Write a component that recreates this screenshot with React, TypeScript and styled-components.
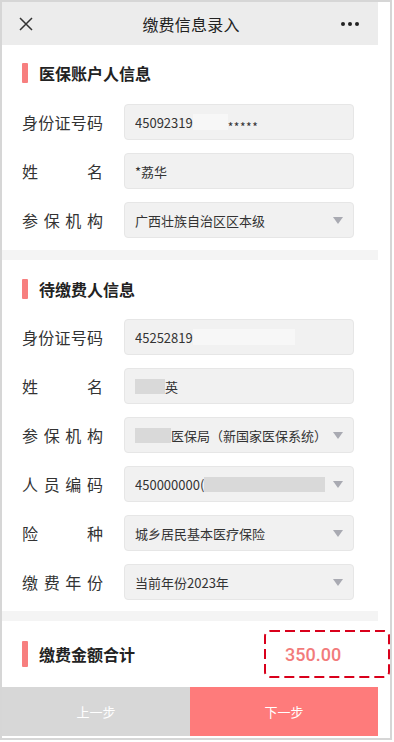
import React from "react";
import styled, { createGlobalStyle } from "styled-components";

const Global = createGlobalStyle`
  html, body { margin: 0; padding: 0; background: #ffffff; }
  body { font-family: "Noto Sans CJK SC", "Noto Sans", sans-serif; color: #333; }
  * { box-sizing: border-box; }
`;

const Frame = styled.div`
  width: 392px;
  height: 740px;
  border: 2px solid #d6d6d6;
  padding: 0 12px 2px 0;
  background: #fff;
`;

const Page = styled.div`
  width: 376px;
  height: 734px;
  display: flex;
  flex-direction: column;
  background: #fff;
`;

const Header = styled.div`
  height: 43px;
  flex: none;
  background: #ececec;
  display: flex;
  align-items: center;
  justify-content: space-between;
  padding: 0 16px 0 12px;
`;

const HeaderTitle = styled.div`
  font-size: 16px;
  color: #222;
  letter-spacing: 0.2px;
  margin-left: 6px;
`;

const IconBox = styled.div`
  width: 24px;
  height: 24px;
  display: flex;
  align-items: center;
  justify-content: center;
`;

const Section = styled.div<{ $pt: number; $pb: number }>`
  flex: none;
  padding: ${(p) => p.$pt}px 0 ${(p) => p.$pb}px 20px;
  display: flex;
  flex-direction: column;
`;

const SectionTitle = styled.div`
  display: flex;
  align-items: center;
  gap: 11px;
  height: 20px;
  font-size: 16px;
  font-weight: 700;
  color: #222;
`;

const Bar = styled.span<{ $h: number }>`
  display: block;
  width: 6px;
  height: ${(p) => p.$h}px;
  background: #f77f7f;
  border-radius: 1px;
`;

const Rows = styled.div<{ $mt: number }>`
  margin-top: ${(p) => p.$mt}px;
  display: flex;
  flex-direction: column;
  gap: 13px;
`;

const Row = styled.div`
  display: flex;
  align-items: center;
  gap: 21px;
`;

const Label = styled.div`
  width: 81px;
  font-size: 16px;
  color: #333;
  text-align: justify;
  text-align-last: justify;
  white-space: nowrap;
  line-height: 20px;
`;

const Field = styled.div`
  width: 230px;
  height: 36px;
  background: #f1f1f1;
  border: 1px solid #e6e6e6;
  border-radius: 4px;
  display: flex;
  align-items: center;
  padding: 0 10px;
  font-size: 13px;
  color: #333;
  white-space: nowrap;
  overflow: hidden;
`;

const Value = styled.div`
  flex: 1;
  display: flex;
  align-items: center;
  overflow: hidden;
`;

const Mask = styled.span<{ $w: number; $dark?: boolean }>`
  display: inline-block;
  width: ${(p) => p.$w}px;
  height: ${(p) => (p.$dark ? 15 : 16)}px;
  background: ${(p) => (p.$dark ? "#d9d9d9" : "#f7f7f7")};
  flex: none;
`;

const Stars = styled.span`
  font-size: 12px;
  align-self: flex-start;
  margin-top: 8px;
  letter-spacing: 0.5px;
`;

const Caret = styled.span`
  flex: none;
  width: 0;
  height: 0;
  border-left: 5px solid transparent;
  border-right: 5px solid transparent;
  border-top: 7px solid #a9aab2;
`;

const Divider = styled.div`
  height: 10px;
  flex: none;
  background: #f4f4f4;
`;

const TotalSection = styled.div`
  height: 66px;
  flex: none;
  display: flex;
  align-items: center;
  justify-content: space-between;
  padding-left: 20px;
`;

const AmountBox = styled.div`
  position: relative;
  width: 126px;
  height: 48px;
  margin-right: -12px;
  display: flex;
  align-items: center;
  padding-left: 21px;
  font-family: "Roboto", "Noto Sans", sans-serif;
  font-size: 18px;
  font-weight: 500;
  color: #f27b7b;
`;

const DashSvg = styled.svg`
  position: absolute;
  inset: 0;
  pointer-events: none;
`;

const Footer = styled.div`
  flex: none;
  height: 49px;
  display: flex;
`;

const StepButton = styled.div<{ $primary?: boolean }>`
  flex: 1;
  display: flex;
  align-items: center;
  justify-content: center;
  background: ${(p) => (p.$primary ? "#fe7b7b" : "#d7d7d7")};
  color: #fff;
  font-size: 13px;
`;

type FieldRow = { label: string; value: React.ReactNode; select?: boolean };

const rows1: FieldRow[] = [
  {
    label: "身份证号码",
    value: (
      <>
        45092319
        <Mask $w={35} />
        <Stars>*****</Stars>
      </>
    ),
  },
  { label: "姓名", value: "*荔华" },
  { label: "参保机构", value: "广西壮族自治区区本级", select: true },
];

const rows2: FieldRow[] = [
  {
    label: "身份证号码",
    value: (
      <>
        45252819
        <Mask $w={102} />
      </>
    ),
  },
  {
    label: "姓名",
    value: (
      <>
        <Mask $w={30} $dark />
        英
      </>
    ),
  },
  {
    label: "参保机构",
    value: (
      <>
        <Mask $w={36} $dark />
        医保局（新国家医保系统）
      </>
    ),
    select: true,
  },
  {
    label: "人员编码",
    value: (
      <>
        450000000(
        <Mask $w={121} $dark />
      </>
    ),
    select: true,
  },
  { label: "险种", value: "城乡居民基本医疗保险", select: true },
  { label: "缴费年份", value: "当前年份2023年", select: true },
];

function spaced(label: string) {
  return label.length >= 5 ? label : label.split("").join(" ");
}

function FormRows({ rows, mt }: { rows: FieldRow[]; mt: number }) {
  return (
    <Rows $mt={mt}>
      {rows.map((r) => (
        <Row key={r.label}>
          <Label>{spaced(r.label)}</Label>
          <Field>
            <Value>{r.value}</Value>
            {r.select && <Caret />}
          </Field>
        </Row>
      ))}
    </Rows>
  );
}

export default function App() {
  return (
    <>
      <Global />
      <Frame>
        <Page>
          <Header>
            <IconBox>
              <svg width="14" height="14" viewBox="0 0 14 14">
                <path d="M1 1 L13 13 M13 1 L1 13" stroke="#333" strokeWidth="1.5" fill="none" />
              </svg>
            </IconBox>
            <HeaderTitle>缴费信息录入</HeaderTitle>
            <IconBox>
              <svg width="20" height="6" viewBox="0 0 20 6">
                <circle cx="3" cy="3" r="2" fill="#222" />
                <circle cx="10" cy="3" r="2" fill="#222" />
                <circle cx="17" cy="3" r="2" fill="#222" />
              </svg>
            </IconBox>
          </Header>

          <Section $pt={18} $pb={12}>
            <SectionTitle>
              <Bar $h={20} />
              医保账户人信息
            </SectionTitle>
            <FormRows rows={rows1} mt={21} />
          </Section>

          <Divider />

          <Section $pt={19} $pb={11}>
            <SectionTitle>
              <Bar $h={20} />
              待缴费人信息
            </SectionTitle>
            <FormRows rows={rows2} mt={20} />
          </Section>

          <Divider />

          <TotalSection>
            <SectionTitle>
              <Bar $h={26} />
              缴费金额合计
            </SectionTitle>
            <AmountBox>
              <DashSvg width="126" height="48" viewBox="0 0 126 48">
                <rect
                  x="1"
                  y="1"
                  width="124"
                  height="46"
                  rx="5"
                  ry="5"
                  fill="none"
                  stroke="#d9001b"
                  strokeWidth="2"
                  strokeDasharray="10 5"
                />
              </DashSvg>
              350.00
            </AmountBox>
          </TotalSection>

          <Footer>
            <StepButton>上一步</StepButton>
            <StepButton $primary>下一步</StepButton>
          </Footer>
        </Page>
      </Frame>
    </>
  );
}
